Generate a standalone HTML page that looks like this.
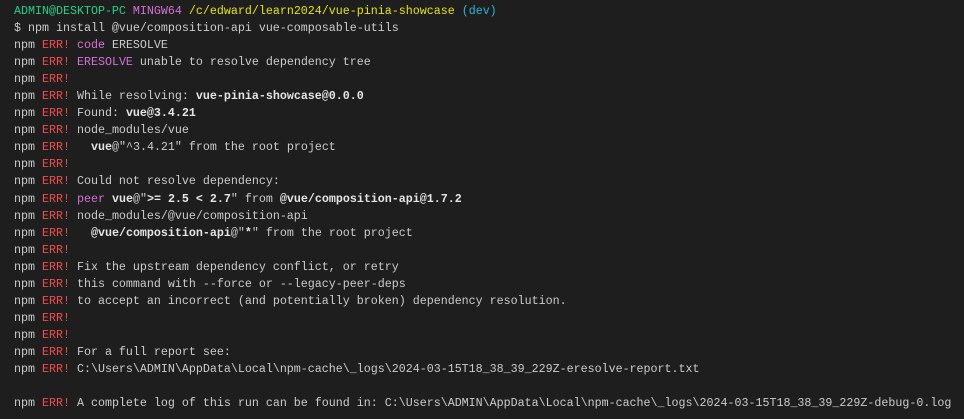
<!DOCTYPE html>
<html><head><meta charset="utf-8"><style>
html,body{margin:0;padding:0;background:#1e1e1e;width:964px;height:419px;overflow:hidden}
pre{margin:0;position:absolute;left:14px;top:3px;font-family:"Liberation Mono","DejaVu Sans Mono",monospace;font-size:11.67px;line-height:17.04px;color:#cccccc;white-space:pre}
.r{color:#f14c4c}.m{color:#d670d6}.g{color:#23d18b}.y{color:#e5e510}.c{color:#29b8db}.b{font-weight:bold;color:#e5e5e5}
</style></head><body><pre><span class="g">ADMIN@DESKTOP-PC</span> <span class="m">MINGW64</span> <span class="y">/c/edward/learn2024/vue-pinia-showcase</span> <span class="c">(dev)</span>
$ npm install @vue/composition-api vue-composable-utils
npm <span class="r">ERR!</span> <span class="m">code</span> ERESOLVE
npm <span class="r">ERR!</span> <span class="m">ERESOLVE</span> unable to resolve dependency tree
npm <span class="r">ERR!</span>
npm <span class="r">ERR!</span> While resolving: <span class="b">vue-pinia-showcase@0.0.0</span>
npm <span class="r">ERR!</span> Found: <span class="b">vue@3.4.21</span>
npm <span class="r">ERR!</span> node_modules/vue
npm <span class="r">ERR!</span>   <span class="b">vue</span>@"^3.4.21" from the root project
npm <span class="r">ERR!</span>
npm <span class="r">ERR!</span> Could not resolve dependency:
npm <span class="r">ERR!</span> <span class="m">peer</span> <span class="b">vue</span>@"<span class="b">&gt;= 2.5 &lt; 2.7</span>" from <span class="b">@vue/composition-api@1.7.2</span>
npm <span class="r">ERR!</span> node_modules/@vue/composition-api
npm <span class="r">ERR!</span>   <span class="b">@vue/composition-api</span>@"<span class="b">*</span>" from the root project
npm <span class="r">ERR!</span>
npm <span class="r">ERR!</span> Fix the upstream dependency conflict, or retry
npm <span class="r">ERR!</span> this command with --force or --legacy-peer-deps
npm <span class="r">ERR!</span> to accept an incorrect (and potentially broken) dependency resolution.
npm <span class="r">ERR!</span>
npm <span class="r">ERR!</span>
npm <span class="r">ERR!</span> For a full report see:
npm <span class="r">ERR!</span> C:\Users\ADMIN\AppData\Local\npm-cache\_logs\2024-03-15T18_38_39_229Z-eresolve-report.txt

npm <span class="r">ERR!</span> A complete log of this run can be found in: C:\Users\ADMIN\AppData\Local\npm-cache\_logs\2024-03-15T18_38_39_229Z-debug-0.log</pre></body></html>
